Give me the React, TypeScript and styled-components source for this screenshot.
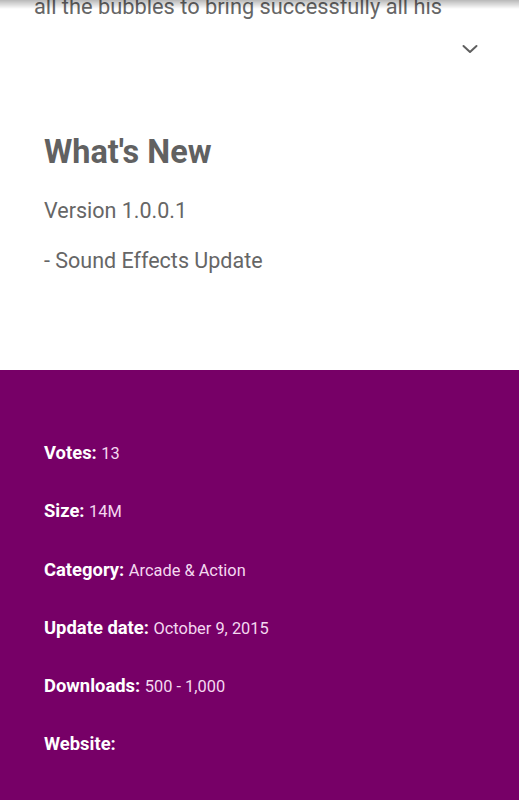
import React from "react";
import styled, { createGlobalStyle } from "styled-components";

const Global = createGlobalStyle`
  html, body { margin: 0; padding: 0; background: #ffffff; }
  body { font-family: Roboto, "Noto Sans", Arial, sans-serif; overflow: hidden; }
`;

const Page = styled.div`
  position: relative;
  width: 519px;
  min-height: 800px;
  display: flex;
  flex-direction: column;
`;

const TopShadow = styled.div`
  position: fixed;
  top: 0;
  left: 0;
  right: 0;
  height: 9px;
  background: linear-gradient(to bottom, rgba(0, 0, 0, 0.28), rgba(0, 0, 0, 0));
  pointer-events: none;
`;

const AboutSection = styled.section`
  background: #ffffff;
  display: flex;
  flex-direction: column;
  padding: 0 0 95px 0;
`;

const Description = styled.p`
  margin: -7px 0 0 0;
  padding: 0 34px;
  font-size: 21.8px;
  line-height: 28px;
  color: #666666;
  white-space: nowrap;
`;

const ExpandRow = styled.div`
  display: flex;
  justify-content: flex-end;
  margin-top: 23px;
  padding-right: 41px;
`;

const NewsBlock = styled.div`
  display: flex;
  flex-direction: column;
  padding-left: 44px;
  margin-top: 78px;
`;

const Heading = styled.h2`
  margin: 0;
  font-size: 32.4px;
  line-height: 40px;
  font-weight: 700;
  color: #616161;
`;

const NewsLine = styled.p<{ $gap: number }>`
  margin: ${(p) => p.$gap}px 0 0 0;
  font-size: 21.5px;
  line-height: 28px;
  color: #666666;
`;

const InfoSection = styled.section`
  background: #770067;
  flex: 1;
  display: flex;
  flex-direction: column;
  gap: 34.3px;
  padding: 71px 44px 60px 44px;
`;

const InfoRow = styled.div`
  font-size: 18.4px;
  line-height: 24px;
  color: #ffffff;
`;

const Label = styled.span`
  font-weight: 700;
  color: #ffffff;
`;

const Value = styled.span`
  font-size: 16.4px;
  line-height: 16px;
  font-weight: 400;
  color: #f4d8f0;
`;

const Chevron = () => (
  <svg width="16" height="10" viewBox="0 0 16 10" fill="none">
    <path d="M1.5 2 L8 8 L14.5 2" stroke="#5f5f5f" strokeWidth="2" strokeLinecap="round" strokeLinejoin="round" />
  </svg>
);

const info: [string, string][] = [
  ["Votes:", "13"],
  ["Size:", "14M"],
  ["Category:", "Arcade & Action"],
  ["Update date:", "October 9, 2015"],
  ["Downloads:", "500 - 1,000"],
  ["Website:", ""],
];

export default function App() {
  return (
    <>
      <Global />
      <Page>
        <AboutSection>
          <Description>all the bubbles to bring successfully all his</Description>
          <ExpandRow>
            <Chevron />
          </ExpandRow>
          <NewsBlock>
            <Heading>What's New</Heading>
            <NewsLine $gap={25}>Version 1.0.0.1</NewsLine>
            <NewsLine $gap={22}>- Sound Effects Update</NewsLine>
          </NewsBlock>
        </AboutSection>
        <InfoSection>
          {info.map(([label, value]) => (
            <InfoRow key={label}>
              <Label>{label}</Label> <Value>{value}</Value>
            </InfoRow>
          ))}
        </InfoSection>
        <TopShadow />
      </Page>
    </>
  );
}
